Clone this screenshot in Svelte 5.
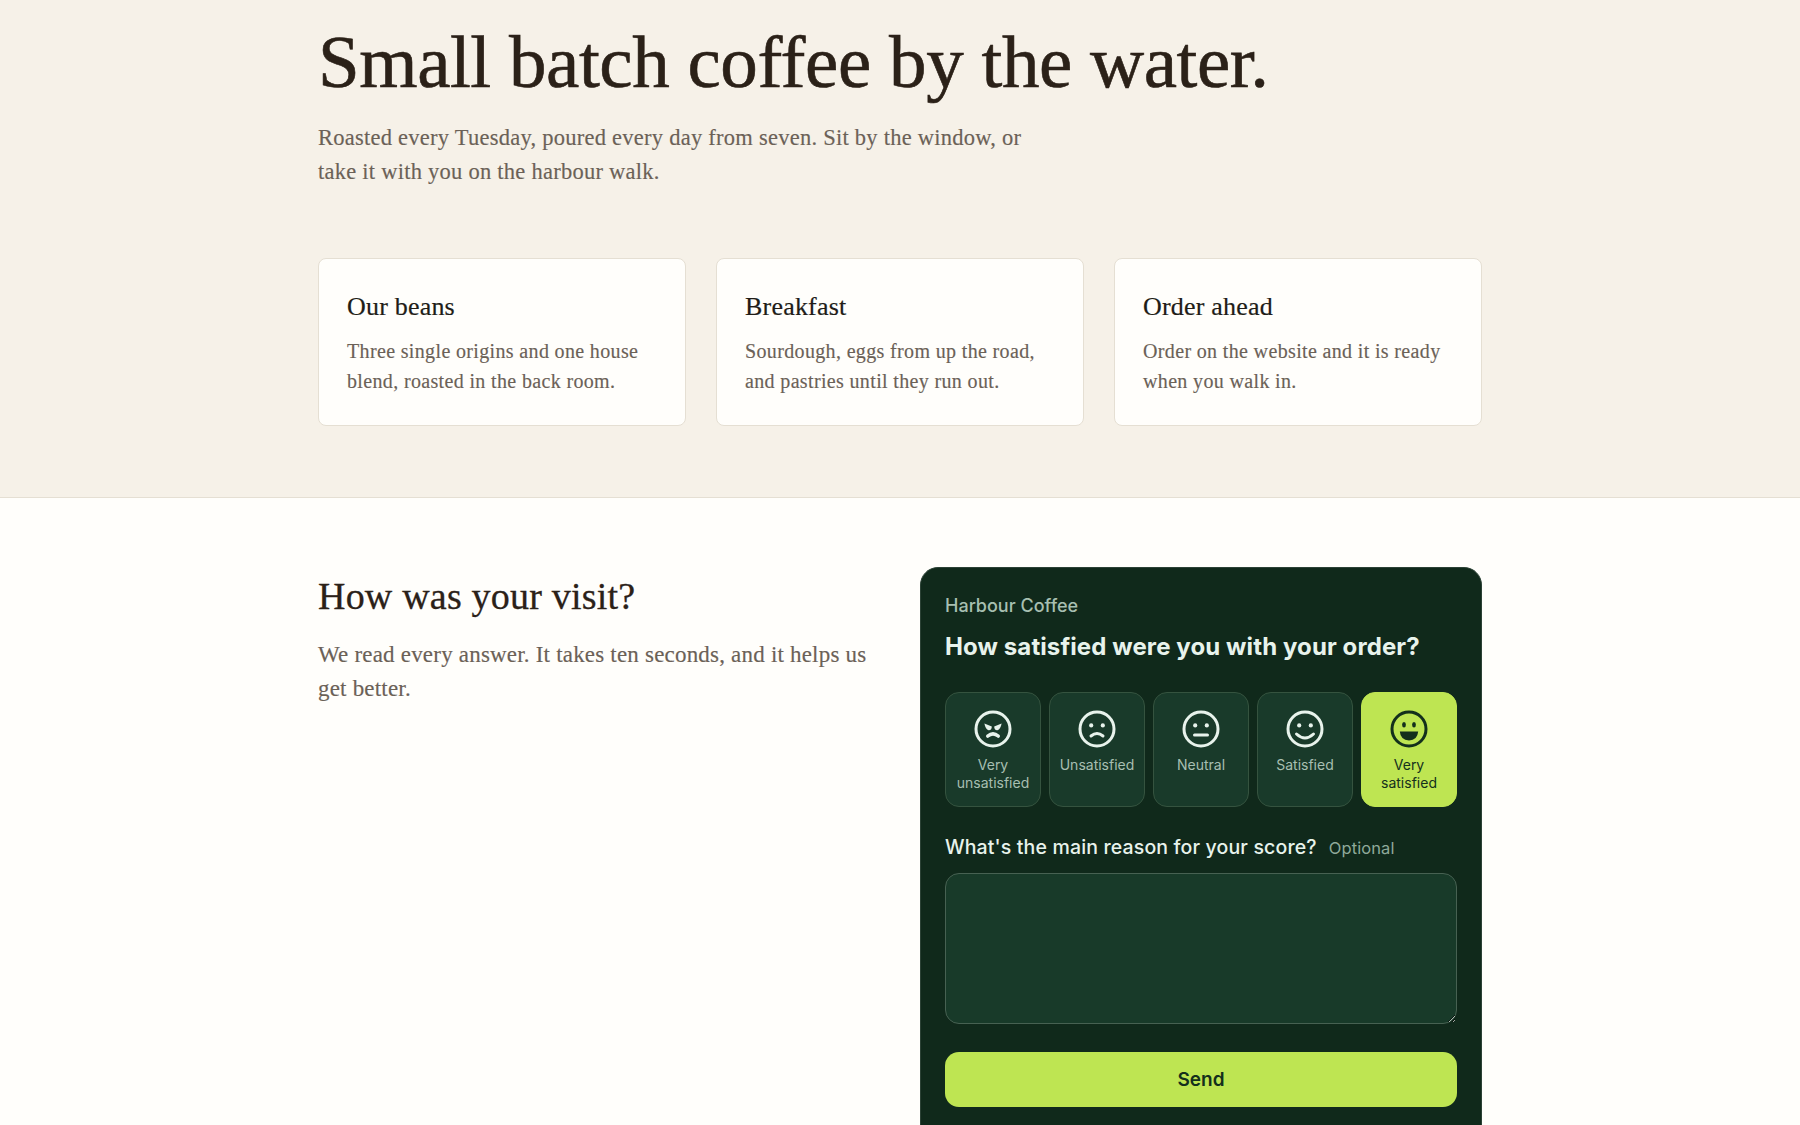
<script>
  const moods = ['vu', 'u', 'n', 's', 'vs'];
  const labels = { vu: 'Very unsatisfied', u: 'Unsatisfied', n: 'Neutral', s: 'Satisfied', vs: 'Very satisfied' };
  const cards = [
    { t: 'Our beans', d: 'Three single origins and one house blend, roasted in the back room.' },
    { t: 'Breakfast', d: 'Sourdough, eggs from up the road, and pastries until they run out.' },
    { t: 'Order ahead', d: 'Order on the website and it is ready when you walk in.' }
  ];
</script>

<div class="page">
  <section class="hero">
    <div class="wrap">
      <h1>Small batch coffee by the water.</h1>
      <p class="lead">Roasted every Tuesday, poured every day from seven. Sit by the window, or take it with you on the harbour walk.</p>
      <div class="cards">
        {#each cards as c}
          <article class="card">
            <h3>{c.t}</h3>
            <p>{c.d}</p>
          </article>
        {/each}
      </div>
    </div>
  </section>
  <section class="visit">
    <div class="wrap grid">
      <div class="intro">
        <h2>How was your visit?</h2>
        <p>We read every answer. It takes ten seconds, and it helps us get better.</p>
      </div>
      <form class="panel">
        <div class="brand">Harbour Coffee</div>
        <div class="q">How satisfied were you with your order?</div>
        <div class="moods">
          {#each moods as m}
            <button type="button" class="mood" class:on={m === 'vs'}>
              <svg viewBox="0 0 40 40" width="40" height="40" fill="none" stroke="currentColor" stroke-width="3" stroke-linecap="round">
                <circle cx="20" cy="20" r="17" />
                {#if m === 'vu'}
                  <path d="M11.4 14.6 L18.8 17.6 Q18.8 21.4 15.6 21.2 Q12.4 20.4 11.4 14.6Z M28.6 14.6 L21.2 17.6 Q21.2 21.4 24.4 21.2 Q27.6 20.4 28.6 14.6Z" fill="currentColor" stroke="none" />
                  <path d="M14.8 27 Q20 22.6 25.2 27" stroke-width="3.6" />
                {:else if m === 'u'}
                  <circle cx="14.2" cy="16.4" r="2.1" fill="currentColor" stroke="none" />
                  <circle cx="25.8" cy="16.4" r="2.1" fill="currentColor" stroke="none" />
                  <path d="M14 27 Q20 22 26 27" />
                {:else if m === 'n'}
                  <circle cx="14.2" cy="16.4" r="2.1" fill="currentColor" stroke="none" />
                  <circle cx="25.8" cy="16.4" r="2.1" fill="currentColor" stroke="none" />
                  <path d="M13.5 26H26.5" />
                {:else if m === 's'}
                  <circle cx="14.2" cy="16.4" r="2.1" fill="currentColor" stroke="none" />
                  <circle cx="25.8" cy="16.4" r="2.1" fill="currentColor" stroke="none" />
                  <path d="M11.5 25 Q20 33 28.5 25" />
                {:else}
                  <ellipse cx="15" cy="15.8" rx="1.9" ry="2.7" fill="currentColor" stroke="none" />
                  <ellipse cx="25" cy="15.8" rx="1.9" ry="2.7" fill="currentColor" stroke="none" />
                  <path d="M10.8 22.6 H29.2 Q28.4 31.4 20 31.4 Q11.6 31.4 10.8 22.6Z" fill="currentColor" stroke="none" />
                {/if}
              </svg>
              <span>{labels[m]}</span>
            </button>
          {/each}
        </div>
        <div class="reason"><label for="why">What's the main reason for your score?</label><span>Optional</span></div>
        <textarea id="why"></textarea>
        <button type="button" class="send">Send</button>
      </form>
    </div>
  </section>
</div>

<style>
  :global(html), :global(body) { margin: 0; background: #fffefb; }
  .page { height: 1125px; overflow: hidden; }
  .hero { background: #f6f1e8; border-bottom: 1px solid #e5dfd3; padding: 18px 0 71px; }
  .wrap { width: 1164px; margin: 0 auto; }
  h1 {
    margin: 0; font: 400 75px/88px "Liberation Serif", serif; color: #2b2118;
    letter-spacing: -0.45px; -webkit-text-stroke: 0.6px #2b2118;
  }
  .lead {
    margin: 15px 0 0; width: 720px; font: 400 22.5px/34px "Liberation Serif", serif; color: #6b6157;
    letter-spacing: 0.25px; -webkit-text-stroke: 0.15px #6b6157;
  }
  .cards { display: grid; grid-template-columns: repeat(3, 1fr); gap: 30px; margin-top: 69px; }
  .card { background: #fffefb; border: 1px solid #e5dfd3; border-radius: 8px; padding: 32px 28px 29px; }
  h3 { margin: 0; font: 400 26px/32px "Liberation Serif", serif; color: #211c17; letter-spacing: 0.2px; -webkit-text-stroke: 0.2px #211c17; }
  .card p { margin: 13px 0 0; font: 400 20px/30px "Liberation Serif", serif; color: #6b6157; letter-spacing: 0.35px; -webkit-text-stroke: 0.15px #6b6157; }
  .visit { background: #fffefb; padding-top: 69px; }
  .grid { display: grid; grid-template-columns: 1fr 562px; column-gap: 40px; align-items: start; }
  .intro { padding-top: 7px; }
  h2 { margin: 0; font: 400 38px/44px "Liberation Serif", serif; color: #2b2118; letter-spacing: 0.2px; -webkit-text-stroke: 0.3px #2b2118; }
  .intro p { margin: 20px 0 0; font: 400 23px/34px "Liberation Serif", serif; color: #6b6157; letter-spacing: 0.2px; -webkit-text-stroke: 0.15px #6b6157; }
  .panel {
    background: #10291b; border: 1px solid #2c4236; border-radius: 18px; padding: 24px 24px 48px;
    font-family: Inter, "Liberation Sans", sans-serif; display: flex; flex-direction: column;
  }
  .brand { font-size: 18px; line-height: 28px; font-weight: 500; color: #a7bfb1; }
  .q { margin-top: 11px; font-size: 24px; line-height: 32px; font-weight: 650; color: #e8f3ec; letter-spacing: 0.1px; }
  .moods { display: grid; grid-template-columns: repeat(5, 96px); gap: 8px; margin-top: 29px; }
  .mood {
    height: 115px; box-sizing: border-box; padding: 16px 4px 0; border: 1px solid #35533f; border-radius: 14px;
    background: #193a2a; color: #e8f3ec; display: flex; flex-direction: column; align-items: center;
    font-family: inherit; gap: 7px;
  }
  .mood span { font-size: 14px; line-height: 17.5px; color: #a7bfb1; text-align: center; }
  .mood.on { background: #bee552; border-color: #bee552; color: #14301c; }
  .mood.on span { color: #14301c; }
  .reason { margin-top: 26px; display: flex; align-items: baseline; gap: 12px; line-height: 28px; }
  .reason label { font-size: 19.5px; font-weight: 550; color: #e8f3ec; letter-spacing: 0.15px; }
  .reason span { font-size: 16.5px; color: #8fa99a; letter-spacing: 0.1px; }
  textarea {
    margin-top: 11px; height: 151px; box-sizing: border-box; width: 100%; display: block;
    background: #183a29; border: 1px solid #476152; border-radius: 14px; color: #e8f3ec;
  }
  .send {
    margin-top: 28px; height: 55px; border: 0; border-radius: 14px; background: #bee552; color: #14301c;
    font: 600 19px Inter, "Liberation Sans", sans-serif;
  }
</style>
